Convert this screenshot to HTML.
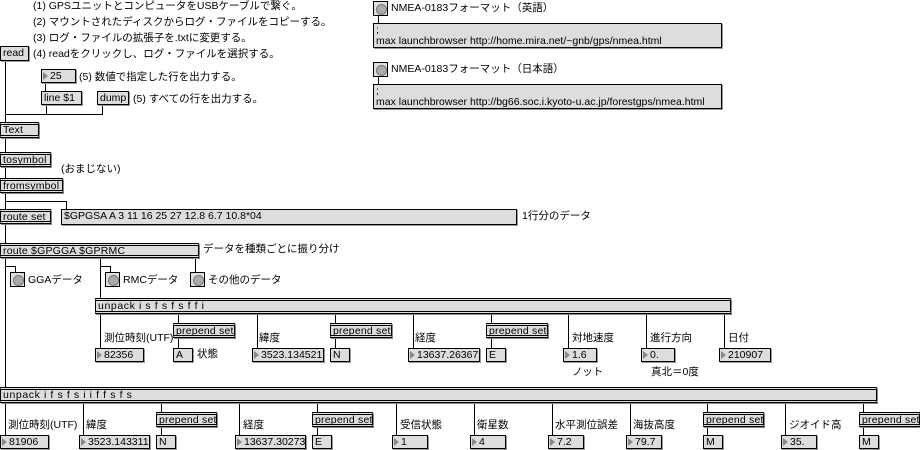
<!DOCTYPE html>
<html><head><meta charset="utf-8"><style>
*{box-sizing:border-box;margin:0;padding:0}
body{width:920px;height:450px;background:#fff;position:relative;overflow:hidden;font-family:"Liberation Sans","Noto Sans CJK JP",sans-serif;font-size:10.5px;color:#000}
div{position:absolute}
.t{white-space:nowrap;line-height:12px}
.o{background:#ddd;border:1px solid #000;border-top:3px double #000;border-bottom:3px double #000;padding-left:2px;font-size:10.5px;line-height:10px;white-space:nowrap;box-shadow:1px 1px 0 #888;letter-spacing:0.2px}
.m{background:#ddd;border:1px solid #000;padding-left:2px;line-height:13px;white-space:nowrap;box-shadow:1px 1px 0 #999}
.n{background:#ddd;border:1px solid #000;padding-left:8px;line-height:12px;white-space:nowrap;height:14px;box-shadow:1px 1px 0 #999;overflow:hidden}
.n:before{content:"";position:absolute;left:1px;top:2px;border-left:5px solid #888;border-top:4px solid transparent;border-bottom:4px solid transparent}
.b{width:15px;height:15px;background:#ddd;border:1px solid #000}
.b:after{content:"";position:absolute;left:2px;top:2px;width:9px;height:9px;border-radius:50%;background:#aaa;border:1px solid #777}
.l{background:#000}
</style></head><body>
<!-- wires -->
<div class="l" style="left:5px;top:61px;width:1px;height:61px"></div>
<div class="l" style="left:45px;top:83px;width:1px;height:8px"></div>
<div class="l" style="left:46px;top:105px;width:1px;height:9px"></div>
<div class="l" style="left:102px;top:105px;width:1px;height:9px"></div>
<div class="l" style="left:5px;top:114px;width:98px;height:1px"></div>
<div class="l" style="left:5px;top:138px;width:1px;height:14px"></div>
<div class="l" style="left:5px;top:167px;width:1px;height:11px"></div>
<div class="l" style="left:5px;top:193px;width:1px;height:16px"></div>
<div class="l" style="left:5px;top:201px;width:62px;height:1px"></div>
<div class="l" style="left:66px;top:201px;width:1px;height:8px"></div>
<div class="l" style="left:5px;top:224px;width:1px;height:19px"></div>
<div class="l" style="left:5px;top:258px;width:1px;height:129px"></div>
<div class="l" style="left:5px;top:266px;width:11px;height:1px"></div>
<div class="l" style="left:15px;top:266px;width:1px;height:6px"></div>
<div class="l" style="left:100px;top:258px;width:1px;height:40px"></div>
<div class="l" style="left:100px;top:266px;width:11px;height:1px"></div>
<div class="l" style="left:110px;top:266px;width:1px;height:6px"></div>
<div class="l" style="left:195px;top:258px;width:1px;height:14px"></div>
<div class="l" style="left:378px;top:15px;width:1px;height:8px"></div>
<div class="l" style="left:378px;top:76px;width:1px;height:8px"></div>
<!-- unpack1 outlets -->
<div class="l" style="left:100px;top:314px;width:1px;height:34px"></div>
<div class="l" style="left:178px;top:314px;width:1px;height:34px"></div>
<div class="l" style="left:257px;top:314px;width:1px;height:34px"></div>
<div class="l" style="left:335px;top:314px;width:1px;height:34px"></div>
<div class="l" style="left:413px;top:314px;width:1px;height:34px"></div>
<div class="l" style="left:491px;top:314px;width:1px;height:34px"></div>
<div class="l" style="left:568px;top:314px;width:1px;height:34px"></div>
<div class="l" style="left:646px;top:314px;width:1px;height:34px"></div>
<div class="l" style="left:724px;top:314px;width:1px;height:34px"></div>
<!-- unpack2 outlets -->
<div class="l" style="left:5px;top:403px;width:1px;height:32px"></div>
<div class="l" style="left:83px;top:403px;width:1px;height:32px"></div>
<div class="l" style="left:161px;top:403px;width:1px;height:32px"></div>
<div class="l" style="left:239px;top:403px;width:1px;height:32px"></div>
<div class="l" style="left:317px;top:403px;width:1px;height:32px"></div>
<div class="l" style="left:396px;top:403px;width:1px;height:32px"></div>
<div class="l" style="left:474px;top:403px;width:1px;height:32px"></div>
<div class="l" style="left:552px;top:403px;width:1px;height:32px"></div>
<div class="l" style="left:630px;top:403px;width:1px;height:32px"></div>
<div class="l" style="left:707px;top:403px;width:1px;height:32px"></div>
<div class="l" style="left:785px;top:403px;width:1px;height:32px"></div>
<div class="l" style="left:863px;top:403px;width:1px;height:32px"></div>

<!-- top comments -->
<div class="t" style="left:33px;top:0px">(1) GPSユニットとコンピュータをUSBケーブルで繋ぐ。</div>
<div class="t" style="left:33px;top:16px">(2) マウントされたディスクからログ・ファイルをコピーする。</div>
<div class="t" style="left:33px;top:32px">(3) ログ・ファイルの拡張子を.txtに変更する。</div>
<div class="t" style="left:33px;top:48px">(4) readをクリックし、ログ・ファイルを選択する。</div>
<div class="m" style="left:0;top:46px;width:29px;height:15px;line-height:12px">read</div>
<div class="n" style="left:41px;top:69px;width:35px">25</div>
<div class="t" style="left:79px;top:71px">(5) 数値で指定した行を出力する。</div>
<div class="m" style="left:41px;top:91px;width:41px;height:14px;line-height:12px">line $1</div>
<div class="m" style="left:97px;top:91px;width:32px;height:14px;line-height:12px">dump</div>
<div class="t" style="left:133px;top:93px">(5) すべての行を出力する。</div>

<div class="o" style="left:0;top:122px;width:39px;height:16px">Text</div>
<div class="o" style="left:0;top:152px;width:51px;height:15px">tosymbol</div>
<div class="t" style="left:61px;top:163px">(おまじない)</div>
<div class="o" style="left:0;top:178px;width:63px;height:15px">fromsymbol</div>
<div class="o" style="left:0;top:209px;width:51px;height:15px">route set</div>
<div class="m" style="left:61px;top:209px;width:456px;height:16px">$GPGSA A 3 11 16 25 27 12.8 6.7 10.8*04</div>
<div class="t" style="left:522px;top:210px">1行分のデータ</div>
<div class="o" style="left:0;top:243px;width:199px;height:15px">route $GPGGA $GPRMC</div>
<div class="t" style="left:203px;top:243px">データを種類ごとに振り分け</div>
<div class="b" style="left:10px;top:272px"></div><div class="t" style="left:28px;top:274px">GGAデータ</div>
<div class="b" style="left:105px;top:272px"></div><div class="t" style="left:123px;top:274px">RMCデータ</div>
<div class="b" style="left:190px;top:272px"></div><div class="t" style="left:208px;top:274px">その他のデータ</div>

<!-- top right -->
<div class="b" style="left:373px;top:1px"></div><div class="t" style="left:391px;top:2px">NMEA-0183フォーマット（英語）</div>
<div class="m" style="left:373px;top:23px;width:349px;height:25px;line-height:11px;padding-top:1px">;<br>max launchbrowser http://home.mira.net/~gnb/gps/nmea.html</div>
<div class="b" style="left:373px;top:62px"></div><div class="t" style="left:391px;top:63px">NMEA-0183フォーマット（日本語）</div>
<div class="m" style="left:373px;top:84px;width:349px;height:25px;line-height:11px;padding-top:1px">;<br>max launchbrowser http://bg66.soc.i.kyoto-u.ac.jp/forestgps/nmea.html</div>

<!-- unpack 1 -->
<div class="o" style="left:95px;top:298px;width:636px;height:16px;letter-spacing:0.6px">unpack i s f s f s f f i</div>
<div class="t" style="left:104px;top:332px">測位時刻(UTF)</div>
<div class="n" style="left:95px;top:348px;width:49px">82356</div>
<div class="o" style="left:173px;top:323px;width:62px;height:15px">prepend set</div>
<div class="m" style="left:173px;top:348px;width:20px;height:14px;line-height:12px">A</div>
<div class="t" style="left:197px;top:348px">状態</div>
<div class="t" style="left:259px;top:332px">緯度</div>
<div class="n" style="left:252px;top:348px;width:72px">3523.134521</div>
<div class="o" style="left:330px;top:323px;width:62px;height:15px">prepend set</div>
<div class="m" style="left:330px;top:348px;width:20px;height:14px;line-height:12px">N</div>
<div class="t" style="left:415px;top:332px">経度</div>
<div class="n" style="left:408px;top:348px;width:72px">13637.26367</div>
<div class="o" style="left:486px;top:323px;width:62px;height:15px">prepend set</div>
<div class="m" style="left:486px;top:348px;width:20px;height:14px;line-height:12px">E</div>
<div class="t" style="left:572px;top:332px">対地速度</div>
<div class="n" style="left:563px;top:348px;width:34px">1.6</div>
<div class="t" style="left:572px;top:366px">ノット</div>
<div class="t" style="left:650px;top:332px">進行方向</div>
<div class="n" style="left:641px;top:348px;width:34px">0.</div>
<div class="t" style="left:651px;top:366px">真北＝0度</div>
<div class="t" style="left:728px;top:332px">日付</div>
<div class="n" style="left:719px;top:348px;width:52px">210907</div>

<!-- unpack 2 -->
<div class="o" style="left:0;top:387px;width:877px;height:16px;letter-spacing:0.6px">unpack i f s f s i i f f s f s</div>
<div class="t" style="left:8px;top:419px">測位時刻(UTF)</div>
<div class="n" style="left:0;top:435px;width:49px">81906</div>
<div class="t" style="left:86px;top:419px">緯度</div>
<div class="n" style="left:79px;top:435px;width:71px">3523.143311</div>
<div class="o" style="left:156px;top:412px;width:61px;height:15px">prepend set</div>
<div class="m" style="left:156px;top:435px;width:20px;height:14px;line-height:12px">N</div>
<div class="t" style="left:243px;top:419px">経度</div>
<div class="n" style="left:235px;top:435px;width:71px">13637.30273</div>
<div class="o" style="left:312px;top:412px;width:61px;height:15px">prepend set</div>
<div class="m" style="left:312px;top:435px;width:20px;height:14px;line-height:12px">E</div>
<div class="t" style="left:400px;top:419px">受信状態</div>
<div class="n" style="left:392px;top:435px;width:36px">1</div>
<div class="t" style="left:477px;top:419px">衛星数</div>
<div class="n" style="left:470px;top:435px;width:36px">4</div>
<div class="t" style="left:555px;top:419px">水平測位誤差</div>
<div class="n" style="left:548px;top:435px;width:36px">7.2</div>
<div class="t" style="left:633px;top:419px">海抜高度</div>
<div class="n" style="left:626px;top:435px;width:36px">79.7</div>
<div class="o" style="left:703px;top:412px;width:61px;height:15px">prepend set</div>
<div class="m" style="left:703px;top:435px;width:20px;height:14px;line-height:12px">M</div>
<div class="t" style="left:789px;top:419px">ジオイド高</div>
<div class="n" style="left:781px;top:435px;width:36px">35.</div>
<div class="o" style="left:859px;top:412px;width:61px;height:15px">prepend set</div>
<div class="m" style="left:859px;top:435px;width:20px;height:14px;line-height:12px">M</div>
</body></html>
